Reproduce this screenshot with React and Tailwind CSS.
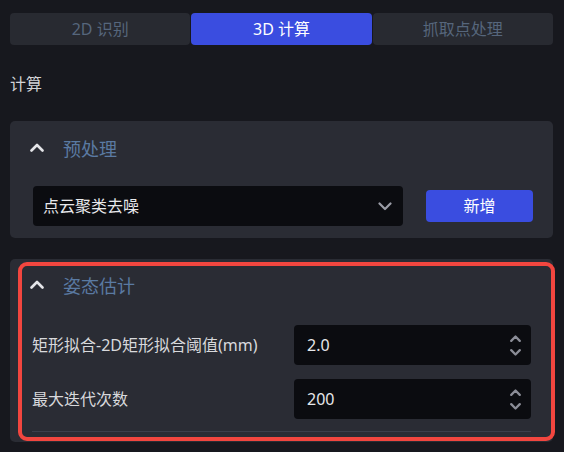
import React from "react";

const font = { fontFamily: '"Noto Sans", "Noto Sans CJK SC", sans-serif' };

function ChevronUp({ className, w = 2.6 }) {
  return (
    <svg className={className} viewBox="0 0 14 9" fill="none">
      <path d="M1.5 7.5 7 2l5.5 5.5" stroke="currentColor" strokeWidth={w} strokeLinecap="round" strokeLinejoin="round" />
    </svg>
  );
}

function ChevronDown({ className, w = 2.2 }) {
  return (
    <svg className={className} viewBox="0 0 14 9" fill="none">
      <path d="M1.5 1.5 7 7l5.5-5.5" stroke="currentColor" strokeWidth={w} strokeLinecap="round" strokeLinejoin="round" />
    </svg>
  );
}

function NumberField({ value }) {
  return (
    <div className="w-[237px] h-10 rounded-[4px] bg-[#0b0c10] flex items-center justify-between pl-[13px] pr-[9px]">
      <span className="text-[16px] leading-6 text-[#e6e7ea]">{value}</span>
      <div className="flex flex-col gap-[7px] text-[#8b8d97]">
        <ChevronUp className="w-[13px] h-[7px]" w={2.9} />
        <ChevronDown className="w-[13px] h-[7px]" w={2.9} />
      </div>
    </div>
  );
}

export default function App() {
  const tabs = ["2D 识别", "3D 计算", "抓取点处理"];
  const active = 1;

  return (
    <div style={font} className="relative w-[564px] h-[452px] overflow-hidden bg-[#17181e] px-[10px] pt-[13px]">
      {/* tabs */}
      <div className="flex gap-px w-[543px]">
        {tabs.map((t, i) => (
          <div
            key={t}
            className={`flex-1 h-8 rounded-[4px] flex items-center justify-center text-[16px] ${
              i === active ? "bg-[#3a4de0] text-white" : "bg-[#282a31] text-[#56667c]"
            }`}
          >
            {t}
          </div>
        ))}
      </div>

      <div className="mt-[27px] text-[16px] leading-6 text-[#d2d3d6]">计算</div>

      {/* 预处理 */}
      <div className="mt-[25px] w-[543px] rounded-[5px] bg-[#2a2c34] pt-[16px] pb-[12px] pl-[23px] pr-[20px]">
        <div className="flex items-center h-6">
          <ChevronUp className="w-[14px] h-[9px] -ml-[3px] -mt-[3px] text-[#e4e5e8]" />
          <span className="ml-[19px] text-[18px] text-[#5a7aa2]">预处理</span>
        </div>
        <div className="mt-[25px] flex items-center justify-between">
          <div className="w-[370px] h-10 rounded-[4px] bg-[#0b0c10] flex items-center justify-between pl-[10px] pr-[11px]">
            <span className="text-[16px] text-[#e8e9ec]">点云聚类去噪</span>
            <ChevronDown className="w-[14px] h-[9px] text-[#9a9ca6]" />
          </div>
          <button className="w-[107px] h-8 rounded-[4px] bg-[#3a4de0] text-[16px] text-white">新增</button>
        </div>
      </div>

      {/* 姿态估计 */}
      <div className="mt-[21px] w-[543px] h-[183px] rounded-[5px] bg-[#2a2c34] pt-[15px] pl-[22px] pr-[22px]">
        <div className="flex items-center h-6">
          <ChevronUp className="w-[14px] h-[9px] -ml-[2px] -mt-[3px] text-[#e4e5e8]" />
          <span className="ml-[19px] text-[18px] text-[#5a7aa2]">姿态估计</span>
        </div>
        <div className="mt-[27px] flex items-center justify-between">
          <span className="text-[16px] text-[#d8d9dc]">矩形拟合-2D矩形拟合阈值(mm)</span>
          <NumberField value="2.0" />
        </div>
        <div className="mt-[14px] flex items-center justify-between">
          <span className="text-[16px] text-[#d8d9dc]">最大迭代次数</span>
          <NumberField value="200" />
        </div>
        <div className="mt-[12px] h-px bg-[#3c3f4b]" />
      </div>

      {/* highlight overlay */}
      <div className="absolute left-[18px] top-[262px] w-[537px] h-[179px] rounded-[9px] border-[4px] border-[#f2463f] pointer-events-none" />
    </div>
  );
}
